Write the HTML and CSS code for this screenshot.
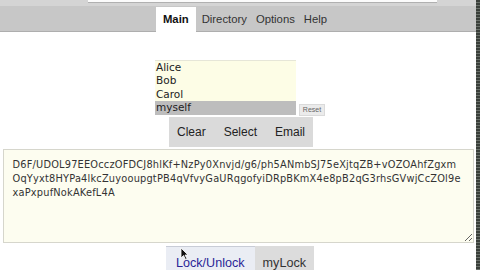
FILE: index.html
```html
<!DOCTYPE html>
<html>
<head>
    <title>Lock Manager</title>
    <link rel="stylesheet" href="styles.css">
</head>
<body>
    <div class="page">
        <!-- Browser chrome strip -->
        <div class="chrome">
            <div class="address"></div>
        </div>

        <!-- Top navigation -->
        <div class="nav">
            <span class="tab active">Main</span>
            <span class="tab">Directory</span>
            <span class="tab">Options</span>
            <span class="tab">Help</span>
        </div>

        <!-- Recipients -->
        <div class="list-row">
            <div class="list">
                <div class="item">Alice</div>
                <div class="item">Bob</div>
                <div class="item">Carol</div>
                <div class="item selected">myself</div>
            </div>
            <button class="reset">Reset</button>
        </div>

        <div class="actions">
            <span class="action">Clear</span>
            <span class="action">Select</span>
            <span class="action">Email</span>
        </div>

        <textarea class="box" spellcheck="false">D6F/UDOL97EEOcczOFDCJ8hlKf+NzPy0Xnvjd/g6/ph5ANmbSJ75eXjtqZB+vOZOAhfZgxm
OqYyxt8HYPa4lkcZuyooupgtPB4qVfvyGaURqgofyiDRpBKmX4e8pB2qG3rhsGVwjCcZOl9e
xaPxpufNokAKefL4A</textarea>

        <div class="bottom">
            <span class="btab current">Lock/Unlock</span>
            <span class="btab">myLock</span>
        </div>

        <!-- mouse pointer -->
        <svg class="cursor" width="9" height="13" viewBox="0 0 9 13">
            <path d="M1 1 L1 11 L3.5 8.5 L5.5 12.5 L7 11.8 L5 8 L8 8 Z" fill="#111" stroke="#fff" stroke-width="0.8"/>
        </svg>
    </div>
    <div class="edge"></div>
</body>
</html>
```

FILE: styles.css
```css
body {
    margin: 0;
    display: flex;
    width: 480px;
    height: 270px;
    overflow: hidden;
    background: #fff;
    font-family: "Liberation Sans", Arial, sans-serif;
}

.page {
    position: relative;
    width: 476px;
    display: flex;
    flex-direction: column;
    align-items: center;
}

.edge {
    width: 4px;
    background: repeating-linear-gradient(#3a3f3a 0, #3a3f3a 2px, #6b716b 2px, #6b716b 3px);
}

/* Chrome */
.chrome {
    align-self: stretch;
    height: 6px;
    background: #d4d4d4;
}

.address {
    margin-left: 88px;
    width: 349px;
    height: 2px;
    background: #fbfbfb;
    border-bottom: 1px solid #b0b0b0;
}

/* Navigation */
.nav {
    align-self: stretch;
    height: 25px;
    background: #c7c7c7;
    border-bottom: 1px solid #aeaeae;
    display: flex;
    justify-content: center;
    align-items: flex-start;
    padding-left: 12px;
}

.tab {
    font-size: 11.3px;
    color: #333;
    padding: 6px 4px 0;
    height: 19px;
    margin-top: 1px;
    margin-right: 1px;
}

.tab.active {
    background: #fff;
    font-weight: bold;
    color: #111;
    padding: 6px 7px 0;
    height: 20px;
    margin-right: 2px;
}

/* List */
.list-row {
    margin-top: 28px;
    display: flex;
    align-items: flex-end;
    gap: 3px;
    margin-left: 4px;
}

.list {
    width: 141px;
    background: #fdfde6;
    border-top: 1px solid #e6e6d8;
    font-family: "DejaVu Sans", sans-serif;
    font-size: 10.5px;
    color: #222;
}

.item {
    height: 13.5px;
    line-height: 13px;
    padding-left: 1px;
}

.item.selected {
    background: #bdbdbd;
}

.reset {
    font-family: "Liberation Sans", Arial, sans-serif;
    font-size: 7px;
    color: #666;
    background: #ebebeb;
    border: 1px solid #dadada;
    width: 26px;
    padding: 0;
    height: 12px;
    margin-bottom: -1px;
}

.actions {
    margin-top: 2px;
    width: 144px;
    height: 31px;
    background: #dadada;
    display: flex;
    align-items: center;
    justify-content: space-between;
    padding: 0 8px;
    box-sizing: border-box;
    font-size: 12px;
    color: #222;
    margin-left: 6px;
}

/* Text box */
.box {
    margin-top: 2px;
    width: 471px;
    height: 95px;
    box-sizing: border-box;
    background: #fdfdf0;
    border: 1px solid #d6d6cc;
    padding: 8px 9px;
    font-family: "DejaVu Sans", sans-serif;
    font-size: 9.8px;
    letter-spacing: 0.2px;
    line-height: 14px;
    color: #333;
    resize: both;
    white-space: pre;
    overflow: hidden;
}

/* Bottom tabs */
.bottom {
    margin-top: 3px;
    display: flex;
    margin-left: 4px;
}

.btab {
    font-size: 12.6px;
    color: #333;
    background: #dcdcdc;
    padding: 10px 8px 0;
    height: 24px;
    box-sizing: border-box;
}

.btab.current {
    background: #eaedf4;
    color: #2a2596;
    border-top: 1px solid #c8ccd6;
    padding: 9px 10px 0;
}

.cursor {
    position: absolute;
    left: 180px;
    top: 247px;
}
```
